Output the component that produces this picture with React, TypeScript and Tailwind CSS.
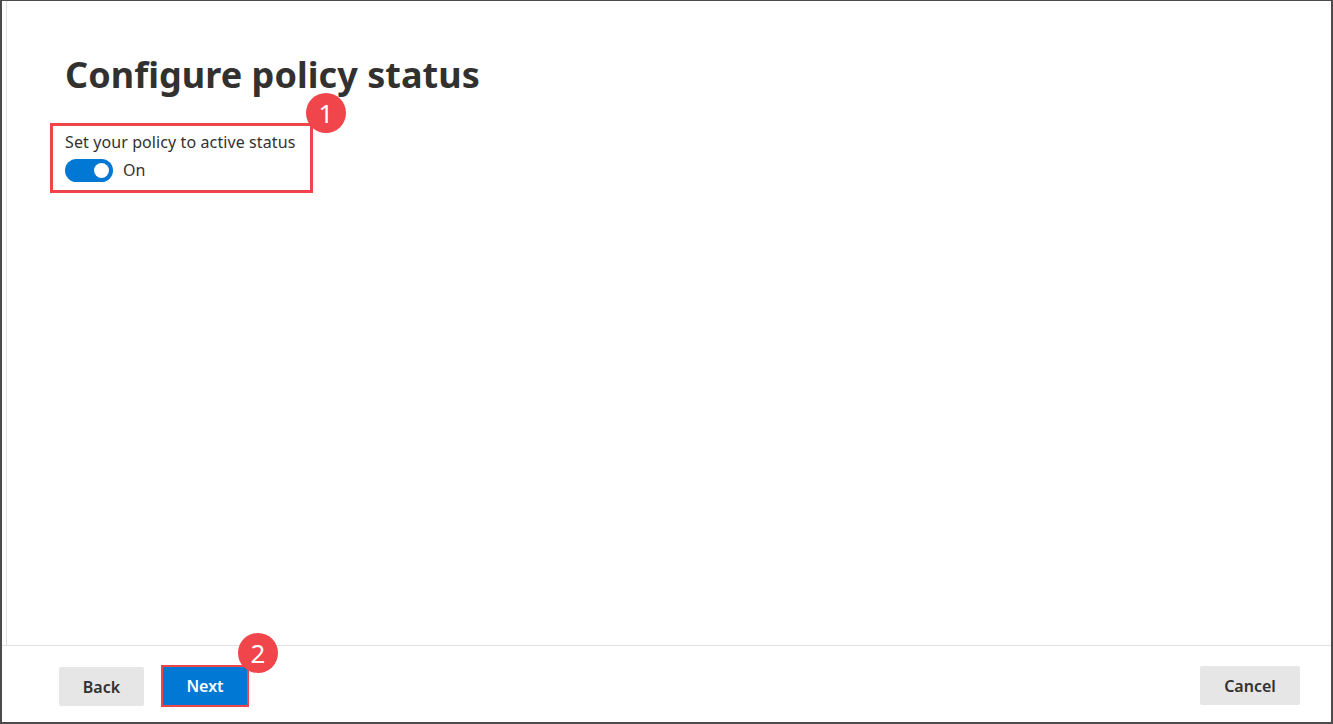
export default function App() {
  const font = { fontFamily: '"Noto Sans", "Open Sans", Arial, sans-serif' };
  return (
    <div
      className="w-[1333px] h-[724px] bg-white border-t border-x-2 border-b-2 border-[#4d4a4b] flex flex-col overflow-hidden"
      style={font}
    >
      <div className="flex-1 pl-[4px]">
        <div className="h-full border-l border-[#e1e1e1] pl-[58px] pt-[52px]">
          <h1 className="text-[36px] leading-[44px] font-bold text-[#323130] tracking-[0.05px]">
            Configure policy status
          </h1>
          <div className="relative -ml-[15px] mt-[26px] w-[263px] border-[3px] border-[#f0444b] px-[12px] pt-[5px] pb-[8px]">
            <div className="text-[16px] leading-[22px] text-[#323130] tracking-[0.1px]">Set your policy to active status</div>
            <div className="mt-[5px] flex items-center gap-[10px]">
              <div className="w-[48px] h-[23px] rounded-full bg-[#0078d4] flex items-center justify-end pr-[4px]">
                <div className="w-[15px] h-[15px] rounded-full bg-white" />
              </div>
              <span className="text-[16px] text-[#323130]">On</span>
            </div>
            <div className="absolute left-[253px] top-[-33px] w-[40px] h-[40px] rounded-full bg-[#f0464b] text-white text-[26px] flex items-center justify-center leading-none">
              1
            </div>
          </div>
        </div>
      </div>
      <div className="h-[77px] border-t border-[#e1e1e1] flex items-start justify-between pl-[57px] pr-[31px] pt-[20px]">
        <div className="flex items-center gap-[17px]">
          <button className="w-[85px] h-[39px] rounded-[2px] bg-[#e6e6e6] text-[16px] font-semibold text-[#323130]">
            Back
          </button>
          <div className="relative -mt-[1px] border-2 border-[#f0444b]">
            <button className="block w-[84px] h-[38px] bg-[#0078d4] text-[16px] font-semibold text-white">
              Next
            </button>
            <div className="absolute left-[75px] top-[-34px] w-[40px] h-[40px] rounded-full bg-[#f0464b] text-white text-[26px] flex items-center justify-center leading-none">
              2
            </div>
          </div>
        </div>
        <button className="w-[100px] h-[39px] rounded-[2px] bg-[#e6e6e6] text-[16px] font-semibold text-[#323130]">
          Cancel
        </button>
      </div>
    </div>
  );
}
